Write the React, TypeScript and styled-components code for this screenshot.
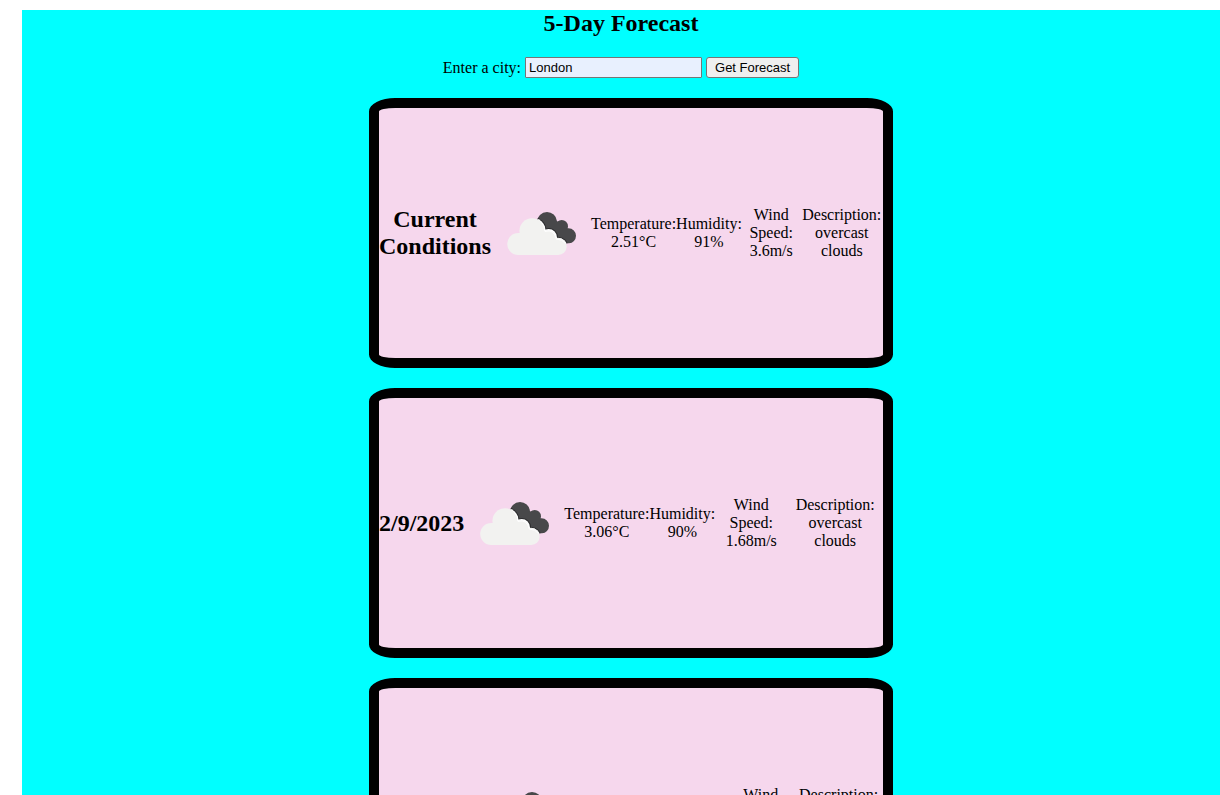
import React, { useState } from "react";
import styled, { createGlobalStyle } from "styled-components";

const GlobalStyle = createGlobalStyle`
  body {
    margin: 10px 0 0 22px;
    background: #fff;
    color: #000;
    font-family: "Liberation Serif", "Times New Roman", serif;
    font-size: 16px;
    line-height: 18px;
  }
`;

const Page = styled.main`
  display: flex;
  flex-direction: column;
  align-items: center;
  gap: 20px;
  min-height: 100vh;
  padding-bottom: 20px;
  background: #00ffff;
  text-align: center;
`;

const Heading = styled.h2`
  margin: 0;
  font-size: 24px;
  line-height: 27px;
  font-weight: bold;
`;

const SearchForm = styled.form`
  display: flex;
  align-items: center;
  gap: 4px;
`;

const CityInput = styled.input`
  box-sizing: border-box;
  width: 177px;
  height: 21px;
  margin: 0;
  padding: 1px 3px;
  border: 1px solid #767676;
  border-radius: 1px;
  background: #e8f0fe;
  color: #000;
  font: 13px "Liberation Sans", Arial, sans-serif;
`;

const SubmitButton = styled.button`
  box-sizing: border-box;
  height: 21px;
  margin: 0;
  padding: 1px 8px;
  border: 1px solid #767676;
  border-radius: 3px;
  background: #efefef;
  color: #000;
  font: 13px "Liberation Sans", Arial, sans-serif;
`;

const Card = styled.section`
  box-sizing: border-box;
  display: flex;
  align-items: center;
  width: 100%;
  max-width: 524px;
  min-height: 270px;
  margin-left: 20px;
  border: 10px solid #000;
  border-radius: 5%;
  background: #f6d7ed;
`;

const Reading = styled.p`
  margin: 0;
`;

const CloudIcon = styled.svg`
  flex: none;
  width: 100px;
  height: 100px;
`;

function BrokenClouds() {
  return (
    <CloudIcon viewBox="0 0 100 100" role="img" aria-label="overcast clouds">
      <defs>
        <clipPath id="rear-cloud">
          <circle cx="56" cy="39" r="10" />
          <circle cx="70.7" cy="43.2" r="6.3" />
          <circle cx="77.5" cy="52.8" r="7.5" />
          <path d="M44 40L64 36L74 46L78 60.3L64 60.3Z" />
        </clipPath>
      </defs>
      <g clipPath="url(#rear-cloud)">
        <path fill="#48484a" d="M40 25H90V65H40Z" />
        <g fill="#2b2b2d">
          <circle cx="42" cy="47.2" r="13.3" />
          <circle cx="58" cy="54" r="9" />
          <circle cx="67.5" cy="63.5" r="9.6" />
        </g>
        <g fill="#fff">
          <circle cx="41.7" cy="47.5" r="12.7" />
          <circle cx="57.7" cy="54.4" r="8.3" />
          <circle cx="67" cy="64" r="9.3" />
        </g>
      </g>
      <g fill="#f2f2f0">
        <circle cx="27.2" cy="61" r="11" />
        <circle cx="41" cy="47.8" r="12.6" />
        <circle cx="57" cy="55.2" r="7.9" />
        <circle cx="67.2" cy="63.5" r="8.5" />
        <path d="M27 50H50L60 58H67V72H27Z" />
      </g>
      <path
        d="M50 39Q54 43 54 48.4Q63 45.8 65.4 56.2Q71 55.8 74.6 60.6"
        fill="none"
        stroke="#fff"
        strokeWidth="1"
      />
    </CloudIcon>
  );
}

interface Forecast {
  title: string;
  temperature: string;
  humidity: string;
  wind: string;
  description: string;
}

const forecasts: Forecast[] = [
  { title: "Current Conditions", temperature: "2.51", humidity: "91", wind: "3.6", description: "overcast clouds" },
  { title: "2/9/2023", temperature: "3.06", humidity: "90", wind: "1.68", description: "overcast clouds" },
  { title: "2/10/2023", temperature: "6.12", humidity: "80", wind: "3.12", description: "overcast clouds" },
];

function ForecastCard({ title, temperature, humidity, wind, description }: Forecast) {
  return (
    <Card>
      <Heading>{title}</Heading>
      <BrokenClouds />
      <Reading>Temperature: {temperature}°C</Reading>
      <Reading>Humidity: {humidity}%</Reading>
      <Reading>Wind Speed: {wind}m/s</Reading>
      <Reading>Description: {description}</Reading>
    </Card>
  );
}

export default function App() {
  const [city, setCity] = useState("London");
  return (
    <>
      <GlobalStyle />
      <Page>
        <Heading>5-Day Forecast</Heading>
        <SearchForm onSubmit={(event) => event.preventDefault()}>
          <label htmlFor="city">Enter a city:</label>
          <CityInput id="city" type="text" value={city} onChange={(event) => setCity(event.target.value)} />
          <SubmitButton type="submit">Get Forecast</SubmitButton>
        </SearchForm>
        {forecasts.map((forecast) => (
          <ForecastCard key={forecast.title} {...forecast} />
        ))}
      </Page>
    </>
  );
}
